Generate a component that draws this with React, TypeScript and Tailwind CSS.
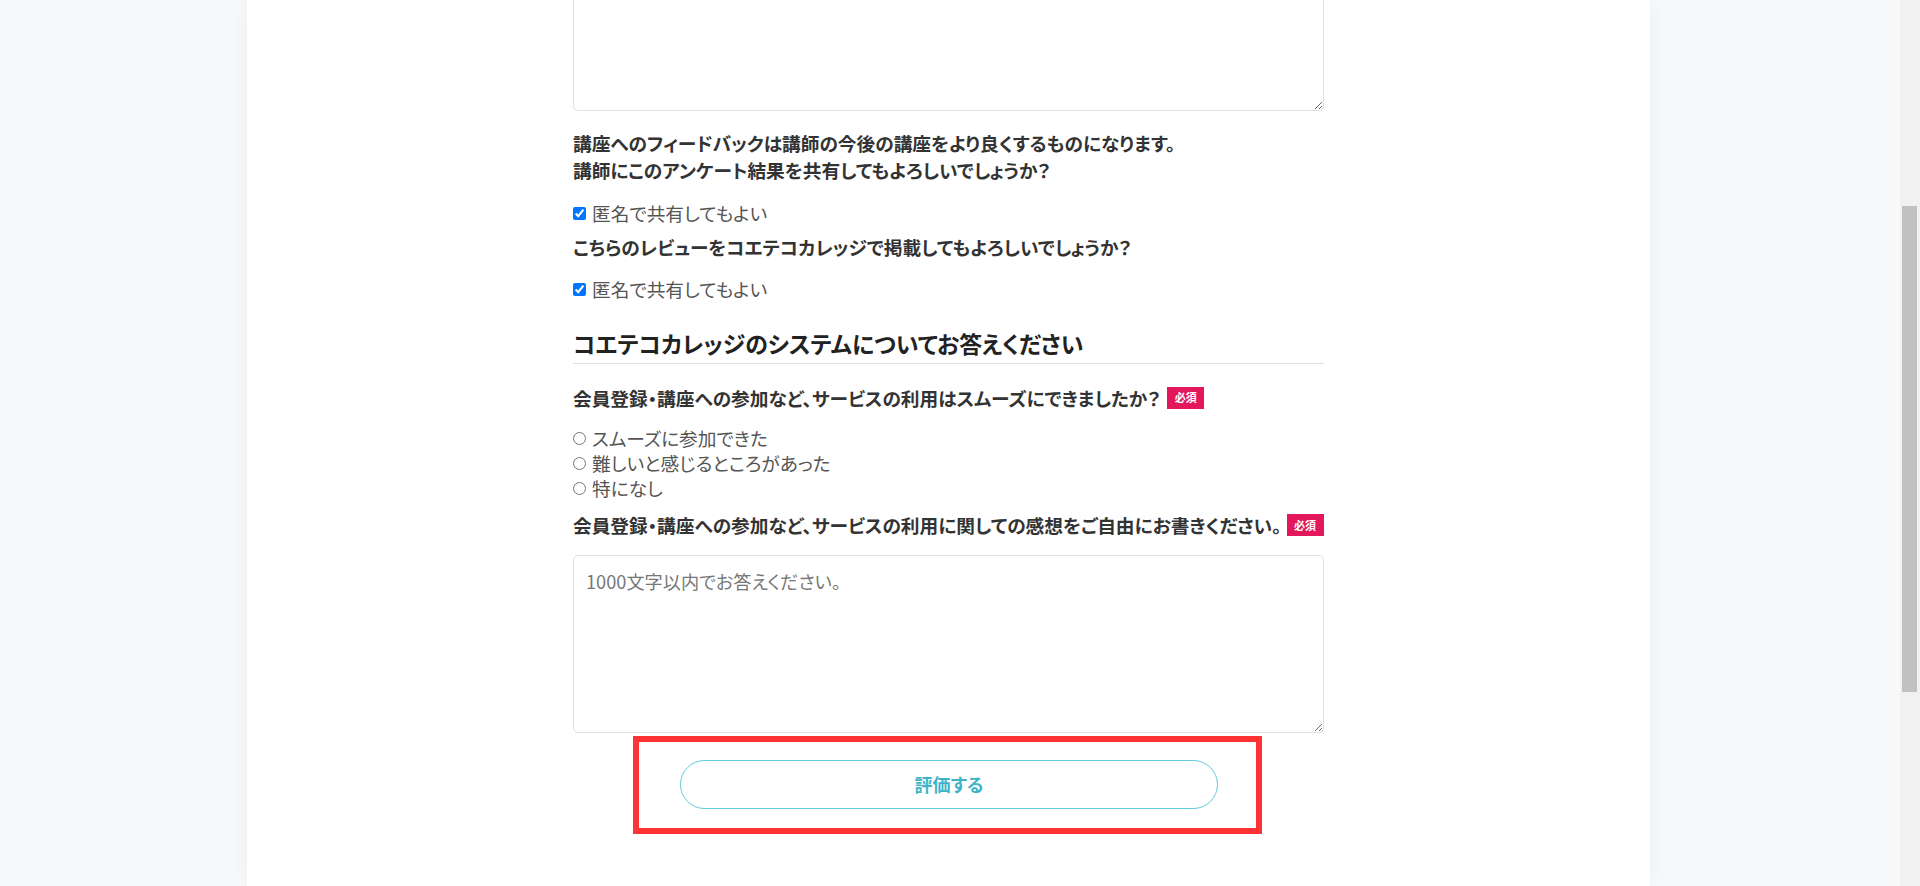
import React from "react";

const font = { fontFamily: '"Noto Sans CJK JP", "Noto Sans", sans-serif' };

function Badge({ gap }: { gap: string }) {
  return (
    <span
      className={`${gap} inline-flex h-[22px] w-[37px] shrink-0 items-center justify-center bg-[#e2185b] text-[11px] font-bold leading-none text-white`}
    >
      必須
    </span>
  );
}

function CheckRow({ label }: { label: string }) {
  return (
    <label className="flex h-[24px] items-center">
      <input type="checkbox" defaultChecked className="h-[13px] w-[13px] accent-[#0075ff]" />
      <span className="ml-[6px] text-[18.7px] text-[#555]">{label}</span>
    </label>
  );
}

function RadioRow({ label, name }: { label: string; name: string }) {
  return (
    <label className="flex h-[25px] items-center">
      <input type="radio" name={name} className="h-[13px] w-[13px]" />
      <span className="ml-[6px] text-[18.7px] text-[#555]">{label}</span>
    </label>
  );
}

const textareaCls =
  "block h-[178px] w-full resize-y rounded-[5px] border border-[#dee2e6] bg-white px-[12px] py-[12px] text-[18.2px] leading-[26px] text-[#333] placeholder:text-[#777] outline-none";

export default function App() {
  return (
    <div
      className="flex h-[886px] w-[1920px] overflow-hidden bg-[#f8f9fb] [font-feature-settings:'palt']"
      style={font}
    >
      <div className="flex flex-1 pl-[247px]">
        <main className="w-[1403px] bg-white shadow-[0_0_22px_rgba(0,0,0,0.05)]">
          <div className="mx-auto w-[751px]">
            <textarea className={`-mt-[67px] ${textareaCls}`} />

            <p className="mt-[19px] text-[18.7px] font-bold leading-[26.5px] text-[#333]">
              講座へのフィードバックは講師の今後の講座をより良くするものになります。
              <br />
              講師にこのアンケート結果を共有してもよろしいでしょうか？
            </p>
            <div className="mt-[18px]">
              <CheckRow label="匿名で共有してもよい" />
            </div>

            <p className="mt-[9px] text-[18.7px] font-bold leading-[26.5px] text-[#333]">
              こちらのレビューをコエテコカレッジで掲載してもよろしいでしょうか？
            </p>
            <div className="mt-[17px]">
              <CheckRow label="匿名で共有してもよい" />
            </div>

            <h2 className="mt-[25px] border-b border-[#dee2e6] pb-[4px] text-[22.9px] font-bold leading-[32px] text-[#222]">
              コエテコカレッジのシステムについてお答えください
            </h2>

            <div className="mt-[21px] flex items-center text-[18.7px] font-bold leading-[26.5px] text-[#333]">
              <span className="whitespace-nowrap">会員登録・講座への参加など、サービスの利用はスムーズにできましたか？</span>
              <Badge gap="ml-[7px]" />
            </div>
            <div className="mt-[15px]">
              <RadioRow name="q1" label="スムーズに参加できた" />
              <RadioRow name="q1" label="難しいと感じるところがあった" />
              <RadioRow name="q1" label="特になし" />
            </div>

            <div className="mt-[11px] flex items-center text-[18.7px] font-bold leading-[26.5px] text-[#333]">
              <span className="whitespace-nowrap">会員登録・講座への参加など、サービスの利用に関しての感想をご自由にお書きください。</span>
              <Badge gap="ml-[5px]" />
            </div>
            <textarea className={`mt-[16px] ${textareaCls}`} placeholder="1000文字以内でお答えください。" />

            <div className="ml-[60px] mt-[3px] w-[629px] border-[6px] border-[#ff3333] pb-[19px] pl-[41px] pt-[18px]">
              <button
                type="button"
                className="flex h-[49px] w-[538px] items-center justify-center rounded-full border border-[#62cad9] bg-white text-[18px] font-bold text-[#3fb4c8]"
              >
                評価する
              </button>
            </div>
          </div>
        </main>
        <div className="flex-1" />
      </div>
      <div className="w-[20px] bg-[#f1f1f1] pt-[206px]">
        <div className="ml-[2px] h-[486px] w-[15px] bg-[#c1c1c1]" />
      </div>
    </div>
  );
}
